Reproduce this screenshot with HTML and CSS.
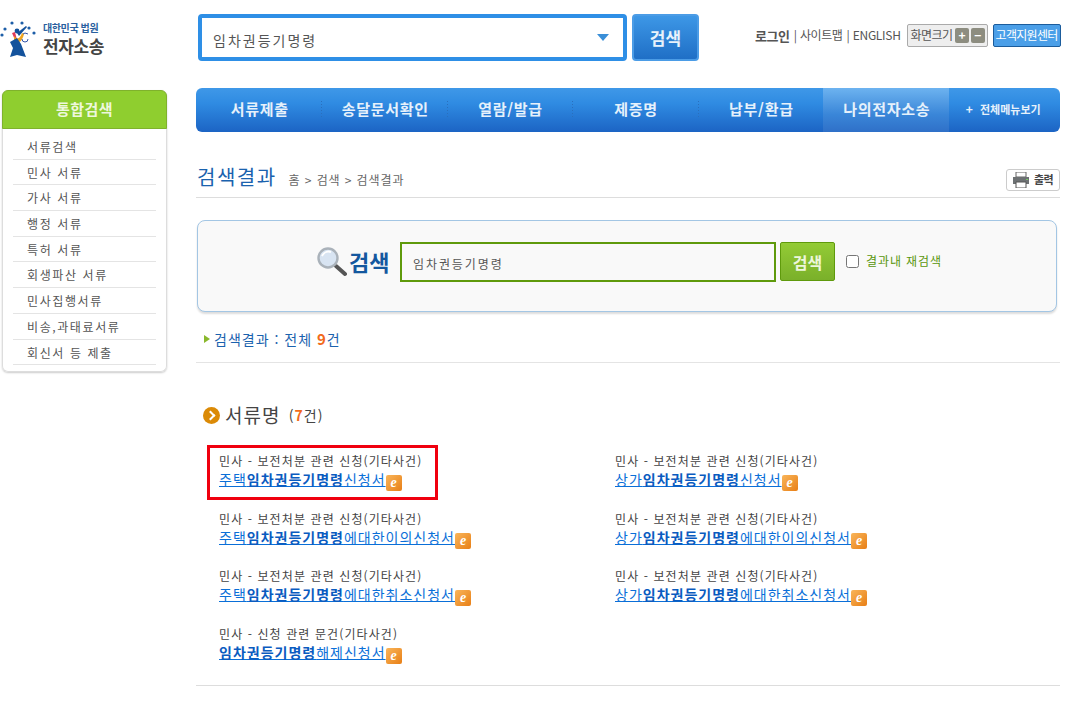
FILE: index.html
```html
<!DOCTYPE html>
<html lang="ko">
<head>
<meta charset="utf-8">
<title>검색결과</title>
<link rel="stylesheet" href="styles.css">
</head>
<body>
<div class="page">
  <header class="top">
    <a class="logo">
      <svg class="logo-mark" width="38" height="38" viewBox="0 0 38 38">
        <g fill="#1d5ea8"><circle cx="2" cy="15" r="1.6"/><circle cx="5" cy="9" r="1.6"/><circle cx="12" cy="3" r="1.6"/><circle cx="22" cy="3" r="1.6"/><circle cx="29" cy="8" r="1.6"/><circle cx="34" cy="13" r="1.6"/></g>
        <path d="M12 13l3-1 2 8-2 0z" fill="#e23b5a"/>
        <path d="M14 16c3 4 6 3 8-3l2 1c-2 8-6 11-10 6z" fill="#f0a51e"/>
        <path d="M10 22l7-4 4 6 5 13-9-2-7 2 3-9z" fill="#13529c"/>
        <circle cx="17" cy="11" r="2.4" fill="#13529c"/>
        <path d="M17 13l9-7 1 1-8 9z" fill="#13529c"/>
        <path d="M22 19a3 3 0 0 0 6 0M23 14l2-1 3 1" fill="none" stroke="#35a"/>
      </svg>
      <span class="logo-text"><small>대한민국 법원</small><strong>전자소송</strong></span>
    </a>
    <div class="top-search">
      <div class="combo"><span>임차권등기명령</span><i class="combo-arrow"></i></div>
      <button class="top-btn">검색</button>
    </div>
    <div class="util">
      <a class="util-b">로그인</a><span>|</span><a>사이트맵</a><span>|</span><a class="util-en">ENGLISH</a>
      <div class="zoom"><span>화면크기</span><b>+</b><b>−</b></div>
      <a class="help">고객지원센터</a>
    </div>
  </header>
  <div class="body">
    <aside class="side">
      <h2>통합검색</h2>
      <ul>
        <li>서류검색</li><li>민사 서류</li><li>가사 서류</li><li>행정 서류</li><li>특허 서류</li><li>회생파산 서류</li><li>민사집행서류</li><li>비송,과태료서류</li><li>회신서 등 제출</li>
      </ul>
    </aside>
    <main class="main">
      <nav class="nav">
        <a>서류제출</a><a>송달문서확인</a><a>열람/발급</a><a>제증명</a><a>납부/환급</a><a class="on">나의전자소송</a><a class="all"><em>+</em>전체메뉴보기</a>
      </nav>
      <div class="title-row">
        <h1>검색결과</h1>
        <p class="crumb">홈 &gt; 검색 &gt; 검색결과</p>
        <a class="print">
          <svg width="18" height="16" viewBox="0 0 18 16"><path d="M4 0h10v5H4z" fill="#fff" stroke="#666"/><path d="M1 5h16v7H1z" fill="#6d7173"/><path d="M4 10h10v6H4z" fill="#fff" stroke="#555"/><path d="M14 7h2v1h-2z" fill="#7c6"/></svg>
          출력
        </a>
      </div>
      <section class="search">
        <svg class="glass" width="31" height="31" viewBox="0 0 31 31">
          <line x1="20" y1="20" x2="29" y2="28" stroke="#555" stroke-width="4" stroke-linecap="round"/>
          <circle cx="12" cy="12" r="9.5" fill="#d8e4f2" stroke="#aab2ba" stroke-width="2.4"/>
          <path d="M6 10c2-4 6-5 9-4" stroke="#fff" stroke-width="2" fill="none"/>
        </svg>
        <span class="search-label">검색</span>
        <div class="field">임차권등기명령</div>
        <button class="green-btn">검색</button>
        <label class="re"><input type="checkbox">결과내 재검색</label>
      </section>
      <p class="count"><i class="chev"></i>검색결과 : 전체 <b>9</b>건</p>
      <h3 class="group"><i class="bullet"></i>서류명 <span>(<b>7</b>건)</span></h3>
      <div class="results">
        <div class="res hit"><p>민사 - 보전처분 관련 신청(기타사건)</p><a>주택<b>임차권등기명령</b>신청서</a><i class="e">e</i></div>
        <div class="res"><p>민사 - 보전처분 관련 신청(기타사건)</p><a>상가<b>임차권등기명령</b>신청서</a><i class="e">e</i></div>
        <div class="res"><p>민사 - 보전처분 관련 신청(기타사건)</p><a>주택<b>임차권등기명령</b>에대한이의신청서</a><i class="e">e</i></div>
        <div class="res"><p>민사 - 보전처분 관련 신청(기타사건)</p><a>상가<b>임차권등기명령</b>에대한이의신청서</a><i class="e">e</i></div>
        <div class="res"><p>민사 - 보전처분 관련 신청(기타사건)</p><a>주택<b>임차권등기명령</b>에대한취소신청서</a><i class="e">e</i></div>
        <div class="res"><p>민사 - 보전처분 관련 신청(기타사건)</p><a>상가<b>임차권등기명령</b>에대한취소신청서</a><i class="e">e</i></div>
        <div class="res"><p>민사 - 신청 관련 문건(기타사건)</p><a><b>임차권등기명령</b>해제신청서</a><i class="e">e</i></div>
      </div>
    </main>
  </div>
</div>
</body>
</html>
```
FILE: styles.css
```css
* { box-sizing: border-box; }
html, body { margin: 0; padding: 0; background: #fff; }
body { font: 12px/1.2 "Noto Sans CJK KR", "Noto Sans", sans-serif; color: #444; overflow: hidden; }
p, h1, h2, h3, ul { margin: 0; padding: 0; }
i, em { font-style: normal; }
.page { width: 1070px; height: 707px; }

.top { display: flex; height: 88px; align-items: flex-start; }
.logo { width: 198px; padding-top: 20px; display: flex; }
.logo-mark { flex: none; }
.logo-text { display: flex; flex-direction: column; margin: 1px 0 0 5px; }
.logo-text small { font-size: 10px; font-weight: 700; color: #2a5f9e; line-height: 14px; letter-spacing: -.4px; }
.logo-text strong { font-size: 17px; color: #444; line-height: 22px; letter-spacing: -.4px; }
.top-search { display: flex; gap: 5px; margin-top: 14px; }
.combo { width: 429px; height: 47px; border: 4px solid #2e8fe6; border-radius: 4px; display: flex; align-items: center; justify-content: space-between; padding: 5px 14px 0 11px; font-size: 14px; color: #555; letter-spacing: 2px; }
.combo-arrow { margin-top: -5px; border: 6px solid transparent; border-top: 7px solid #3a8fd8; border-bottom: 0; }
.top-btn { width: 67px; height: 47px; border: 2px solid #4b9ce6; border-radius: 4px; background: linear-gradient(#3d97e6, #1f6fc6); color: #e8f2fb; font: 700 17px "Noto Sans CJK KR", sans-serif; padding: 0; }
.util { display: flex; align-items: center; margin: 24px 0 0 56px; font-size: 12px; color: #555; white-space: nowrap; }
.util a { letter-spacing: -.4px; }
.util span { margin: 0 3px 0 4px; }
.util-b { font-weight: 700; font-size: 13px; }
.util-en { letter-spacing: -.3px !important; }
.zoom { display: flex; align-items: center; gap: 2px; width: 81px; height: 23px; margin-left: 6px; padding: 0 2px 0 3px; border: 1px solid #aaa; border-radius: 2px; background: #eee; }
.zoom span { margin: 0 1px 0 0; letter-spacing: -.6px; }
.zoom b { width: 14px; height: 15px; background: #8d8d80; color: #fff; border-radius: 2px; text-align: center; line-height: 14px; font-size: 12px; }
.help { display: block; width: 68px; height: 23px; margin-left: 5px; padding: 0 2px; line-height: 20px; background: #4b9fe8; border: 1px solid #1b5c9c; border-radius: 2px; color: #fff; letter-spacing: -.7px !important; }

.body { display: flex; align-items: flex-start; }
.side { width: 165px; margin: 2px 29px 0 2px; border: 1px solid #ddd; border-top: 0; border-radius: 6px; box-shadow: 0 1px 2px #ccc; padding-bottom: 6px; }
.side h2 { margin: 0 -1px; height: 39px; background: #8fce2f; border: 1px solid #7fb22c; border-radius: 6px 6px 0 0; color: #eef7dd; font-size: 15px; line-height: 35px; text-align: center; font-weight: 700; letter-spacing: .4px; }
.side ul { list-style: none; padding: 5px 10px 0; }
.side li { height: 25.7px; line-height: 25px; padding-left: 14px; border-bottom: 1px solid #e4e4e4; letter-spacing: 1.6px; color: #555; }

.main { width: 864px; }
.nav { display: flex; height: 44px; border-radius: 6px; background: linear-gradient(#3f98e8 0, #2f8be2 35%, #1c64c4 100%); overflow: hidden; }
.nav a { width: 126px; padding-left: 2px; text-align: center; font-size: 15px; font-weight: 700; color: #e6f1fb; line-height: 42px; letter-spacing: .7px; }
.nav a + a { background: repeating-linear-gradient(#2a6fbd 0 1px, transparent 1px 3px) no-repeat left center / 1px 18px; }
.nav a.on { background: linear-gradient(#6db3f0, #3a86d8 60%, #2f70c8); }
.nav a.all { width: 112px; padding: 0 2px 0 0; font-size: 11px; letter-spacing: 0; background: none; }
.nav a.all em { margin-right: 7px; font-size: 12px; }

.title-row { display: flex; align-items: flex-end; height: 66px; padding-bottom: 7px; border-bottom: 1px solid #ddd; }
h1 { font-size: 20px; font-weight: 400; color: #1a62ae; letter-spacing: 1.5px; line-height: 26px; margin-left: 1px; }
.crumb { margin: 0 0 3px 12px; color: #666; letter-spacing: .9px; }
.print { margin-left: auto; margin-bottom: -1px; display: flex; align-items: center; gap: 4px; width: 54px; height: 22px; padding-left: 5px; border: 1px solid #ccc; border-radius: 3px; font-size: 11px; font-weight: 700; color: #444; letter-spacing: -.5px; }

.search { display: flex; align-items: center; width: 860px; height: 92px; margin: 22px 0 0 1px; padding: 0 0 9px 118px; border: 1px solid #a3c6e4; border-radius: 8px; background: #f9f9f9; box-shadow: 0 2px 2px #ddd; }
.glass { flex: none; }
.search-label { margin: -2px 0 0 2px; width: 51px; font-size: 22px; font-weight: 700; color: #14589f; line-height: 1; }
.field { width: 376px; height: 40px; border: 2px solid #5f9a0c; padding: 2px 0 0 11px; line-height: 36px; color: #555; letter-spacing: 1.9px; }
.green-btn { width: 55px; height: 39px; margin-left: 4px; border: 1px solid #5f9a0c; border-radius: 2px; background: linear-gradient(#93cb35, #7ab02a); color: #edf6dc; font: 700 16px "Noto Sans CJK KR", sans-serif; padding: 0; }
.re { display: flex; align-items: center; margin-left: 11px; color: #5a960c; letter-spacing: .9px; }
.re input { width: 13px; height: 13px; margin: 0 7px 0 0; }

.count { display: flex; align-items: center; height: 51px; padding: 4px 0 0 8px; border-bottom: 1px solid #e4e4e4; font-size: 14px; color: #1a62ae; white-space: pre; letter-spacing: 1px; }
.count b { color: #f26a1b; font-size: 15px; }
.chev { width: 0; height: 0; margin-right: 4px; border-left: 6px solid #8ab82c; border-top: 4px solid transparent; border-bottom: 4px solid transparent; }
.group { display: flex; align-items: center; margin: 40px 0 0 7px; font-size: 19px; font-weight: 400; color: #444; white-space: pre; line-height: 24px; letter-spacing: 1px; }
.group span { font-size: 14px; margin-left: 2px; }
.group b { color: #f26a1b; font-weight: 700; }
.bullet { flex: none; width: 17px; height: 17px; margin-right: 5px; border-radius: 50%; background: #db8a06; position: relative; }
.bullet::after { content: ""; position: absolute; left: 4px; top: 5px; width: 5px; height: 5px; border: solid #fff; border-width: 2px 2px 0 0; transform: rotate(45deg); }

.results { display: grid; grid-template-columns: 396px 396px; grid-auto-rows: 57.5px; margin-top: 25px; padding-left: 23px; height: 234px; border-bottom: 1px solid #ddd; }
.res p { font-size: 12px; line-height: 17px; color: #444; letter-spacing: 1.1px; }
.res a { font-size: 14px; line-height: 20px; color: #0a6fd8; text-decoration: underline; letter-spacing: 1px; }
.res a b { color: #0a5bc0; }
.e { display: inline-block; width: 16px; height: 16px; vertical-align: -2px; border-radius: 2px; background: linear-gradient(135deg, #f9b55a, #e87f16); color: #fff; font: italic 700 14px/15px "Liberation Serif", serif; text-align: center; }
.hit { margin: -4px 0 0 -9px; padding: 4px 0 0 9px; width: 225px; height: 49px; outline: 3px solid #f0000f; }
```
